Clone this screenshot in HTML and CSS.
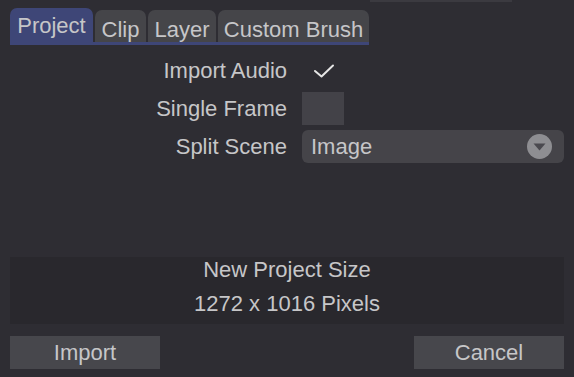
FILE: index.html
```html
<!DOCTYPE html>
<html lang="en">
    <head>
        <meta charset="UTF-8">
        <title>Import</title>
        <link rel="stylesheet" href="styles.css">
    </head>
    <body>
        <div class="topEdge"></div>
        <div class="tabs">
            <div class="tab active">Project</div>
            <div class="tab clip">Clip</div>
            <div class="tab layer">Layer</div>
            <div class="tab brush">Custom Brush</div>
        </div>

        <div class="form">
            <div class="label">Import Audio</div>
            <div class="control">
                <svg class="check" width="22" height="14" viewBox="0 0 22 14">
                    <path d="M2 7 L8.5 12.5 L20 1.5" fill="none" stroke="#e6e6e6" stroke-width="2" stroke-linecap="round" stroke-linejoin="round"/>
                </svg>
            </div>
            <div class="label">Single Frame</div>
            <div class="control"><div class="box"></div></div>
            <div class="label">Split Scene</div>
            <div class="control">
                <div class="select">
                    <span>Image</span>
                    <svg width="25" height="25" viewBox="0 0 25 25">
                        <circle cx="12.5" cy="12.5" r="12.5" fill="#8e8e92"/>
                        <path d="M6.5 9.5 H18.5 L12.5 16.5 Z" fill="#4a494f"/>
                    </svg>
                </div>
            </div>
        </div>

        <div class="info">
            <p>New Project Size</p>
            <p class="size">1272 x 1016 Pixels</p>
        </div>

        <div class="buttons">
            <button class="btn">Import</button>
            <button class="btn">Cancel</button>
        </div>
    </body>
</html>
```

FILE: styles.css
```css
body {
    font-family: "Liberation Sans", Arial, sans-serif;
    font-size: 22px;
    background-color: #2e2d33;
    color: #c6c6c8;
    margin: 0;
    padding: 0 10px;
    height: 377px;
    overflow: hidden;
    position: relative;
}
.topEdge {
    position: absolute;
    left: 370px;
    top: 0;
    width: 142px;
    height: 2px;
    background: #3b3a40;
}
.tabs {
    display: flex;
    align-items: flex-end;
    gap: 2px;
    width: 359px;
    margin-top: 8px;
    border-bottom: 3px solid #3e4677;
}
.tab {
    height: 32px;
    line-height: 40px;
    text-align: center;
    background: #454549;
    border-radius: 7px 7px 0 0;
}
.tab.active {
    width: 83px;
    height: 34px;
    line-height: 35px;
    background: #3e4677;
}
.tab.clip {
    width: 51px;
}
.tab.layer {
    width: 68px;
}
.tab.brush {
    width: 151px;
}
.form {
    display: grid;
    grid-template-columns: 277px 1fr;
    column-gap: 15px;
    row-gap: 5px;
    margin-top: 9px;
}
.label {
    text-align: right;
    height: 33px;
    line-height: 34px;
}
.control {
    height: 33px;
    display: flex;
    align-items: center;
}
.check {
    margin-left: 11px;
}
.box {
    width: 42px;
    height: 33px;
    background: #434248;
}
.select {
    flex: 1;
    height: 33px;
    display: flex;
    align-items: center;
    justify-content: space-between;
    padding: 0 12px 0 9px;
    background: #454449;
    border-radius: 6px;
}
.info {
    margin-top: 94px;
    height: 67px;
    background: #29282d;
    text-align: center;
}
.info p {
    margin: 0;
    line-height: 26px;
}
.info .size {
    margin-top: 8px;
}
.buttons {
    display: flex;
    justify-content: space-between;
    margin-top: 12px;
}
.btn {
    width: 150px;
    height: 33px;
    background: #47474c;
    color: #c6c6c8;
    font-family: "Liberation Sans", Arial, sans-serif;
    font-size: 22px;
    border: none;
    padding: 0;
}
```
